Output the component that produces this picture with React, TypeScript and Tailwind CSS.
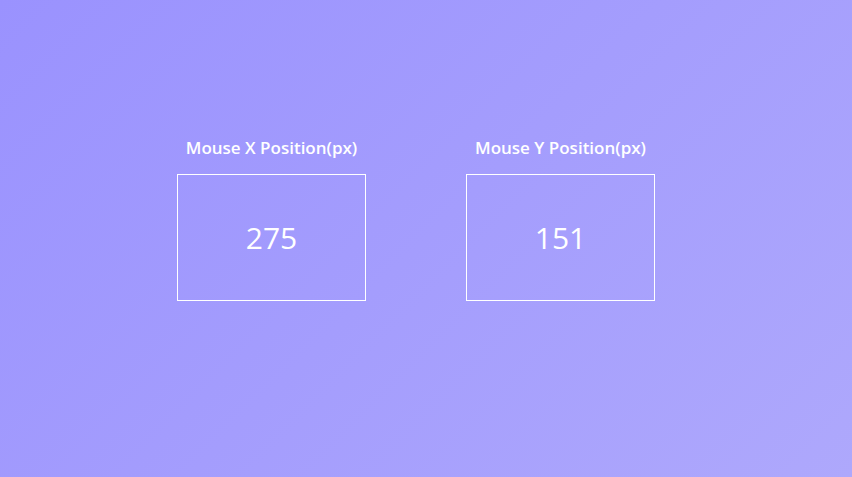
export default function App() {
  const items = [
    { label: 'Mouse X Position(px)', value: 275 },
    { label: 'Mouse Y Position(px)', value: 151 },
  ];

  return (
    <div
      className="h-screen w-full bg-[linear-gradient(135deg,#9a92fe_0%,#aea8fc_100%)] text-white"
      style={{ fontFamily: '"Open Sans", sans-serif' }}
    >
      <div className="flex gap-[100px] pl-[177px] pt-[136px]">
        {items.map((item) => (
          <div key={item.label} className="flex w-[189px] flex-col items-center">
            <h2 className="mb-[14px] text-[17px] leading-6 font-semibold">{item.label}</h2>
            <div className="flex h-[127px] w-full items-center justify-center border border-white">
              <span className="text-[30px] leading-none">{item.value}</span>
            </div>
          </div>
        ))}
      </div>
    </div>
  );
}
